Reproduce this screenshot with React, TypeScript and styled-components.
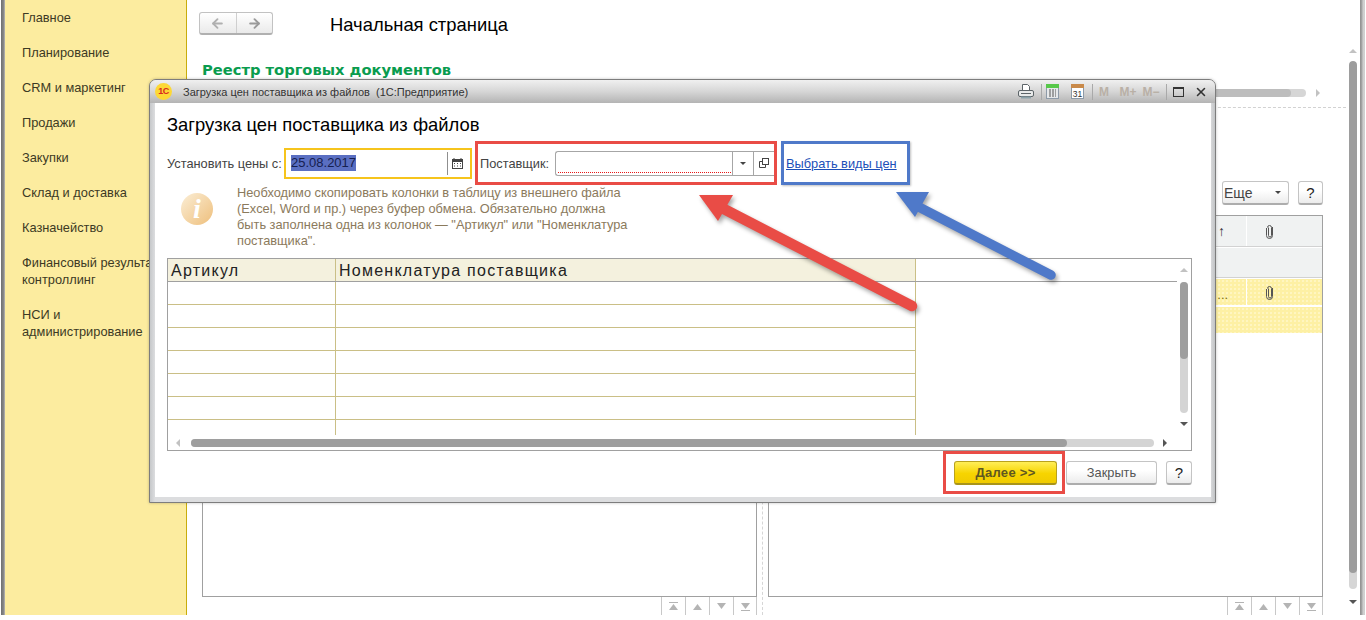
import React from 'react';
import styled, { createGlobalStyle } from 'styled-components';
import { ArrowLeft, ArrowRight, X } from 'lucide-react';

const GlobalStyle = createGlobalStyle`
  html, body {
    margin: 0;
    padding: 0;
    background: #fff;
  }
  body {
    font-family: "Liberation Sans", Arial, sans-serif;
    font-size: 12.8px;
    color: #333;
  }
`;

const Screen = styled.div`
  position: relative;
  width: 1366px;
  height: 620px;
  overflow: hidden;
`;

const Shell = styled.div`
  display: flex;
  height: 615px;
`;

const LeftEdge = styled.div`
  width: 5px;
  background: linear-gradient(90deg, #fff 0, #fff 1px, #6f6f6f 1px, #8d8d8d 4px, #c4c4c4 5px);
`;

const RightEdge = styled.div`
  width: 6px;
  margin-left: 3px;
  background: linear-gradient(90deg, #8f8f8f 0, #a8a8a8 2px, #cfcfcf 3px, #d0d0d0 5px, #fff 5px);
`;

const Sidebar = styled.nav`
  width: 181px;
  flex: none;
  box-sizing: content-box;
  background: #fcec9f;
  border-right: 1px solid #c8ad0c;
  overflow: hidden;
`;

const SidebarItem = styled.div`
  padding: 9px 0 9px 17px;
  line-height: 17px;
  white-space: pre;
  color: #3d3a24;
`;

const Main = styled.main`
  width: 1162px;
  flex: none;
  display: flex;
  flex-direction: column;
`;

const TopBar = styled.div`
  display: flex;
  align-items: flex-start;
  height: 35px;
  padding: 12px 0 0 12px;
`;

const NavGroup = styled.div`
  display: flex;
  width: 74px;
  height: 23px;
  box-sizing: border-box;
  border: 1px solid #c2c2c2;
  border-bottom: 2px solid #b0b0b0;
  border-radius: 3px;
  background: linear-gradient(#fff, #eaeaea);
`;

const NavCell = styled.div<{ $divider?: boolean; $tone: string }>`
  flex: 1;
  display: flex;
  align-items: center;
  justify-content: center;
  color: ${p => p.$tone};
  border-left: ${p => (p.$divider ? '1px solid #cfcfcf' : 'none')};
`;

const PageTitle = styled.h1`
  margin: 0 0 0 57px;
  font-size: 18.4px;
  font-weight: 400;
  line-height: 26px;
  color: #000;
`;

const FormHeading = styled.h2`
  margin: 12px 0 8px 15px;
  font-family: "DejaVu Sans", Verdana, sans-serif;
  font-size: 14.7px;
  font-weight: 700;
  line-height: 22px;
  color: #0a9c4f;
`;

const TopScrollRow = styled.div`
  display: flex;
  align-items: center;
  height: 8px;
  padding-left: 15px;
`;

const TopScrollTrack = styled.div`
  width: 1104px;
  height: 8px;
  border-radius: 4px;
  background: #d6d6d6;
`;

const TopScrollThumb = styled.div`
  width: 1089px;
  height: 8px;
  border-radius: 4px;
  background: #bdbdbd;
`;

const Triangle = styled.span<{ $dir: 'up' | 'down' | 'left' | 'right'; $size?: number; $tone?: string }>`
  display: block;
  flex: none;
  width: 0;
  height: 0;
  ${p => {
    const s = p.$size ?? 4;
    const c = p.$tone ?? '#c2c2c2';
    if (p.$dir === 'up') return `border-left:${s}px solid transparent;border-right:${s}px solid transparent;border-bottom:${s}px solid ${c};`;
    if (p.$dir === 'down') return `border-left:${s}px solid transparent;border-right:${s}px solid transparent;border-top:${s}px solid ${c};`;
    if (p.$dir === 'left') return `border-top:${s}px solid transparent;border-bottom:${s}px solid transparent;border-right:${s}px solid ${c};`;
    return `border-top:${s}px solid transparent;border-bottom:${s}px solid transparent;border-left:${s}px solid ${c};`;
  }}
`;

const TopScrollArrow = styled.div`
  margin-left: 10px;
`;

const DashedRule = styled.div`
  margin-top: 10px;
  margin-right: 3px;
  border-top: 1px dashed #d2d2d2;
`;

const ActionRow = styled.div`
  display: flex;
  justify-content: flex-end;
  gap: 9px;
  margin-top: 73px;
  padding-right: 26px;
`;

const Button = styled.button<{ $w: number; $primary?: boolean }>`
  width: ${p => p.$w}px;
  height: 24px;
  box-sizing: border-box;
  padding: 0;
  display: flex;
  align-items: center;
  justify-content: center;
  font-family: inherit;
  font-size: ${p => (p.$primary ? 13 : 12.8)}px;
  letter-spacing: ${p => (p.$primary ? 0.3 : 0)}px;
  font-weight: ${p => (p.$primary ? 700 : 400)};
  color: ${p => (p.$primary ? '#5f5720' : '#555')};
  border: 1px solid ${p => (p.$primary ? '#b9a21e' : '#c4c4c4')};
  border-bottom: 2px solid ${p => (p.$primary ? '#a8941a' : '#adadad')};
  border-radius: 3px;
  background: ${p => (p.$primary ? 'linear-gradient(#ffee58, #f7d400 55%, #f0cb00)' : 'linear-gradient(#fff 40%, #ececec)')};
`;

const HelpMark = styled.span`
  font-size: 15px;
  color: #222;
`;

const MoreButton = styled(Button)`
  justify-content: flex-start;
  padding-left: 1px;
  font-size: 14px;
  color: #444;
  gap: 22px;
`;

const Panels = styled.div`
  display: grid;
  grid-template-columns: 555px 555px;
  column-gap: 11px;
  margin: 10px 0 0 15px;
  position: relative;
`;

const PanelColumn = styled.div`
  display: flex;
  flex-direction: column;
`;

const ListBox = styled.div`
  height: 382px;
  box-sizing: border-box;
  border: 1px solid #a0a0a0;
  overflow: hidden;
`;

const PanelDivider = styled.div`
  position: absolute;
  top: 0;
  bottom: 0;
  left: 560px;
  border-left: 1px dashed #d6d6d6;
`;

const ListRow = styled.div<{ $h: number; $kind: 'head' | 'group' | 'mark' }>`
  display: flex;
  height: ${p => p.$h}px;
  margin-bottom: 2px;
  background-color: ${p => (p.$kind === 'mark' ? '#fdf0a4' : '#f0f2f2')};
  background-image: ${p =>
    p.$kind === 'mark' ? 'radial-gradient(#fff6c2 0.7px, transparent 0.8px)' : 'none'};
  background-size: 4px 4px;
  box-shadow: 0 1px 0 ${p => (p.$kind === 'mark' ? '#fff' : '#d2d2d2')};
`;

const ListCell = styled.div<{ $w?: number }>`
  display: flex;
  align-items: center;
  ${p => (p.$w ? 'justify-content:flex-end;padding-right:21px;' : 'justify-content:flex-start;padding-left:18px;')}
  ${p => (p.$w ? `width:${p.$w}px;flex:none;box-sizing:border-box;` : 'flex:1;')}
  border-right: ${p => (p.$w ? '1px solid #fff' : 'none')};
  color: #333;
  font-size: 14px;
`;

const TruncatedValue = styled.span`
  margin-right: -3px;
  padding-top: 4px;
  font-size: 12.8px;
  color: #7a6a10;
`;

const Pager = styled.div`
  display: flex;
  justify-content: flex-end;
  height: 18px;
`;

const PagerCell = styled.div`
  width: 23px;
  display: flex;
  align-items: center;
  justify-content: center;
  border-left: 1px solid #c8c8c8;
  &:last-child {
    border-right: 1px solid #c8c8c8;
    width: 22px;
  }
`;

const PageScroll = styled.div`
  width: 8px;
  flex: none;
  height: 615px;
  box-sizing: border-box;
  padding-top: 49px;
  display: flex;
  flex-direction: column;
  align-items: center;
`;

const PageScrollTrack = styled.div`
  width: 8px;
  height: 528px;
  margin-top: 8px;
  border-radius: 4px;
  background: #d6d6d6;
  overflow: hidden;
`;

const PageScrollThumb = styled.div`
  width: 8px;
  height: 512px;
  border-radius: 4px;
  background: #9d9d9d;
`;

const PageScrollEnd = styled.div`
  margin-top: 11px;
`;

/* modal window */

const Modal = styled.section`
  position: absolute;
  left: 149px;
  top: 79px;
  width: 1067px;
  height: 424px;
  box-sizing: border-box;
  border: 1px solid #7d7d7d;
  border-radius: 7px 7px 0 0;
  background: linear-gradient(90deg, #c6c8ca, #dcdddf 5px, #dcdddf calc(100% - 5px), #c2c4c6);
  box-shadow: 0 0 3px rgba(0, 0, 0, 0.25);
  display: flex;
  flex-direction: column;
`;

const TitleBar = styled.header`
  display: flex;
  align-items: center;
  height: 23px;
  flex: none;
  border-radius: 6px 6px 0 0;
  background: linear-gradient(#f0f0f0, #d6d6d6 50%, #b4b4b4);
`;

const LogoBadge = styled.span`
  width: 17px;
  height: 17px;
  margin-left: 5px;
  flex: none;
  border-radius: 50%;
  background: #fdd835;
  color: #d8281e;
  font-size: 9px;
  font-weight: 700;
  line-height: 17px;
  text-align: center;
  letter-spacing: -0.5px;
`;

const WindowTitle = styled.span`
  margin-left: 11px;
  font-size: 11px;
  color: #333;
  white-space: pre;
`;

const WindowTools = styled.div`
  display: flex;
  align-items: center;
  height: 100%;
  margin-left: auto;
  padding-right: 4px;
`;

const ToolSlot = styled.div<{ $w: number }>`
  width: ${p => p.$w}px;
  display: flex;
  align-items: center;
  justify-content: center;
  color: #333;
`;

const MemoryKey = styled(ToolSlot)`
  font-size: 12px;
  font-weight: 700;
  color: #b9b0a6;
`;

const ToolSeparator = styled.span<{ $left?: number }>`
  width: 1px;
  height: 16px;
  margin-left: ${p => p.$left ?? 0}px;
  background: #a9a9a9;
`;

const ModalBody = styled.div`
  flex: 1;
  margin: 0 4px 5px 5px;
  padding: 11px 19px 0 12px;
  background: #fff;
  min-height: 0;
`;

const ModalHeading = styled.h2`
  margin: 0 0 5px;
  font-size: 18.4px;
  font-weight: 400;
  line-height: 22px;
  color: #000;
`;

const FormRow = styled.div`
  display: flex;
  align-items: center;
  height: 44px;
`;

const FieldLabel = styled.label<{ $w: number; $pad?: number }>`
  width: ${p => p.$w}px;
  padding-left: ${p => p.$pad ?? 0}px;
  flex: none;
  box-sizing: border-box;
  color: #444;
  white-space: nowrap;
`;

const DateFrame = styled.div`
  width: 188px;
  height: 31px;
  box-sizing: border-box;
  border: 2px solid #f6c41c;
  display: flex;
  align-items: center;
`;

const DateValue = styled.div`
  flex: 1;
  padding-left: 5px;
`;

const Selected = styled.span`
  font-size: 13px;
  line-height: 16px;
  display: inline-block;
  background: #5a6fc2;
  color: #16204f;
`;

const FieldDivider = styled.span`
  width: 1px;
  height: 23px;
  background: #8f8f8f;
`;

const CalendarSlot = styled.div`
  width: 22px;
  box-sizing: border-box;
  padding-right: 4px;
  display: flex;
  justify-content: center;
  color: #444;
`;

const SupplierFrame = styled.div`
  width: 302px;
  height: 44px;
  margin-left: 3px;
  box-sizing: border-box;
  border: 3px solid #e94c46;
  display: flex;
  align-items: center;
`;

const SupplierInput = styled.div`
  flex: 1;
  height: 25px;
  box-sizing: border-box;
  border: 1px solid #a6a6a6;
  border-right: none;
  border-radius: 3px 0 0 3px;
  display: flex;
`;

// required-field marker: a red dotted line along the bottom of the input
const SupplierText = styled.div`
  flex: 1;
  margin: 0 1px 2px 2px;
  background: linear-gradient(90deg, #e81818 50%, transparent 50%) left bottom / 2px 1px repeat-x;
`;

const InputButton = styled.div`
  width: 20px;
  flex: none;
  display: flex;
  align-items: center;
  justify-content: center;
  border-left: 1px solid #a6a6a6;
  color: #444;
`;

const PriceFrame = styled.div`
  width: 129px;
  height: 44px;
  margin-left: 4px;
  box-sizing: border-box;
  border: 3px solid #4f79c9;
  padding-left: 2px;
  display: flex;
  align-items: center;
  box-shadow: 1px 1px 2px rgba(0, 0, 0, 0.25);
`;

const PriceLink = styled.a`
  color: #1b4fb8;
  text-decoration: underline;
  white-space: nowrap;
`;

const InfoRow = styled.div`
  display: flex;
  height: 73px;
`;

const InfoBadge = styled.div`
  width: 32px;
  height: 32px;
  margin: 8px 0 0 14px;
  flex: none;
  border-radius: 50%;
  background: linear-gradient(135deg, #fbeed6, #eebf7c);
  color: #fff;
  font-family: "Liberation Serif", serif;
  font-size: 28px;
  font-style: italic;
  font-weight: 700;
  line-height: 32px;
  text-align: center;
`;

const InfoText = styled.p`
  margin: 0 0 0 24px;
  line-height: 16px;
  color: #8b7a5c;
  white-space: pre;
`;

const SheetFrame = styled.div`
  height: 193px;
  box-sizing: border-box;
  border: 1px solid #a0a0a0;
  display: flex;
  flex-direction: column;
`;

const SheetTop = styled.div`
  display: flex;
  flex: 1;
  min-height: 0;
`;

const SheetGrid = styled.div`
  flex: 1;
  overflow: hidden;
`;

const SheetHeader = styled.div`
  display: flex;
  height: 23px;
  box-sizing: border-box;
  border-bottom: 1px solid #a0a0a0;
`;

const HeaderCell = styled.div<{ $w: number }>`
  width: ${p => p.$w}px;
  box-sizing: border-box;
  padding-left: 3px;
  background: #f4f1de;
  border-right: 1px solid #cabf86;
  font-size: 16px;
  letter-spacing: 1.25px;
  line-height: 23px;
  color: #222;
  white-space: nowrap;
`;

const SheetRow = styled.div`
  display: flex;
  height: 23px;
  box-sizing: border-box;
`;

const SheetCell = styled.div<{ $w: number }>`
  width: ${p => p.$w}px;
  box-sizing: border-box;
  border-right: 1px solid #cabf86;
  border-bottom: 1px solid #cabf86;
`;

const VerticalBar = styled.div`
  width: 14px;
  flex: none;
  display: flex;
  flex-direction: column;
  align-items: center;
  padding-top: 9px;
  box-sizing: border-box;
`;

const VerticalTrack = styled.div`
  width: 8px;
  height: 131px;
  margin-top: 10px;
  border-radius: 4px;
  background: #d4d4d4;
`;

const VerticalThumb = styled.div`
  width: 8px;
  height: 77px;
  border-radius: 4px;
  background: #9e9e9e;
`;

const BarArrow = styled.div<{ $top?: number }>`
  margin-top: ${p => p.$top ?? 0}px;
`;

const HorizontalBar = styled.div`
  height: 15px;
  flex: none;
  display: flex;
  align-items: center;
  padding-left: 8px;
`;

const HorizontalTrack = styled.div`
  width: 963px;
  height: 8px;
  margin-left: 11px;
  border-radius: 4px;
  background: #d4d4d4;
`;

const HorizontalThumb = styled.div`
  width: 876px;
  height: 8px;
  border-radius: 4px;
  background: #9e9e9e;
`;

const ArrowEnd = styled.div`
  margin-left: 9px;
`;

const ModalFooter = styled.div`
  display: flex;
  align-items: center;
  height: 43px;
  padding-left: 776px;
`;

const NextFrame = styled.div`
  width: 122px;
  height: 43px;
  box-sizing: border-box;
  border: 3px solid #e94c46;
  padding-left: 8px;
  display: flex;
  align-items: center;
`;

const CloseButton = styled(Button)`
  margin-left: 1px;
`;

const FooterHelp = styled(Button)`
  margin-left: 9px;
`;

const CalloutLayer = styled.svg`
  position: absolute;
  left: 0;
  top: 0;
  pointer-events: none;
  filter: drop-shadow(2px 3px 2px rgba(0, 0, 0, 0.35));
`;

const MENU = [
  'Главное',
  'Планирование',
  'CRM и маркетинг',
  'Продажи',
  'Закупки',
  'Склад и доставка',
  'Казначейство',
  'Финансовый результат и\nконтроллинг',
  'НСИ и\nадминистрирование',
];

const INFO_TEXT =
  'Необходимо скопировать колонки в таблицу из внешнего файла\n' +
  '(Excel, Word и пр.) через буфер обмена. Обязательно должна\n' +
  'быть заполнена одна из колонок — "Артикул" или "Номенклатура\n' +
  'поставщика".';

const ClipIcon = () => (
  <svg width="9" height="15" viewBox="0 0 9 15" fill="none" stroke="#555" strokeWidth="1">
    <path d="M3 3v8a1.5 1.5 0 0 0 3 0V3a2 2 0 0 0-4 0" transform="translate(0.5 0.5)" />
    <path d="M1.5 4v7.5a3 3 0 0 0 6 0V3" />
  </svg>
);

const CalendarIcon = () => (
  <svg width="11" height="11" viewBox="0 0 11 11">
    <rect x="0.5" y="1.5" width="10" height="9" fill="none" stroke="#444" />
    <rect x="0.5" y="1" width="10" height="3" fill="#444" />
    <path d="M2 0v2M9 0v2" stroke="#444" />
    <path d="M2 5.5h1M5 5.5h1M8 5.5h1M2 8h1M5 8h1M8 8h1" stroke="#444" />
  </svg>
);

const OpenIcon = () => (
  <svg width="10" height="10" viewBox="0 0 10 10" fill="none" stroke="#444">
    <rect x="3.5" y="0.5" width="6" height="6" />
    <path d="M3 3.5H0.5v6h6V7" />
  </svg>
);

const PrintIcon = () => (
  <svg width="16" height="15" viewBox="0 0 16 15" fill="none" stroke="#5c6468">
    <path d="M4.5 6.5v-6h5l2 2v4" fill="#fff" />
    <rect x="0.5" y="6.5" width="15" height="6" rx="1.5" fill="#e8eaea" />
    <path d="M3 9.5h10" />
    <path d="M3 13.5h10" stroke="#8aa0a8" strokeWidth="2" />
  </svg>
);

const CalcIcon = () => (
  <svg width="13" height="15" viewBox="0 0 13 15">
    <rect x="0.5" y="0.5" width="12" height="14" fill="#e6e8ea" stroke="#8d9aa8" />
    <rect x="0" y="0" width="13" height="4" fill="#57c84a" />
    <path d="M3 6h2M6 6h2M9 6h1M3 8h2M6 8h2M9 8h1M3 10h2M6 10h2M9 10h1M3 12h2M6 12h2M9 12h1" stroke="#555" />
  </svg>
);

const CalendarDayIcon = () => (
  <svg width="13" height="15" viewBox="0 0 13 15">
    <rect x="0.5" y="0.5" width="12" height="14" fill="#fff" stroke="#8d9aa8" />
    <rect x="0" y="0" width="13" height="4" fill="#c98a4a" />
    <text x="6.5" y="12.5" fontSize="8.5" textAnchor="middle" fontFamily="Liberation Sans" fill="#333">31</text>
  </svg>
);

const MaximizeIcon = () => (
  <svg width="11" height="10" viewBox="0 0 11 10" fill="none">
    <rect x="0.5" y="1" width="10" height="8.5" stroke="#333" />
    <path d="M0 1h11" stroke="#333" strokeWidth="2" />
  </svg>
);

const PagerMark = ({ dir, bar }: { dir: 'up' | 'down'; bar?: boolean }) => (
  <svg width="11" height="9" viewBox="0 0 11 9" fill="#b4b4b4">
    {dir === 'up' ? <path d="M5.5 2 10 8H1z" /> : <path d="M5.5 7 10 1H1z" />}
    {bar && (dir === 'up' ? <rect x="1" y="0" width="9" height="1" /> : <rect x="1" y="8" width="9" height="1" />)}
  </svg>
);

const PanelPager = () => (
  <Pager>
    <PagerCell><PagerMark dir="up" bar /></PagerCell>
    <PagerCell><PagerMark dir="up" /></PagerCell>
    <PagerCell><PagerMark dir="down" /></PagerCell>
    <PagerCell><PagerMark dir="down" bar /></PagerCell>
  </Pager>
);

export default function App() {
  return (
    <Screen>
      <GlobalStyle />
      <Shell>
        <LeftEdge />
        <Sidebar>
          {MENU.map(item => (
            <SidebarItem key={item}>{item}</SidebarItem>
          ))}
        </Sidebar>
        <Main>
          <TopBar>
            <NavGroup>
              <NavCell $tone="#b0b0b0"><ArrowLeft size={15} strokeWidth={3} /></NavCell>
              <NavCell $divider $tone="#9a9a9a"><ArrowRight size={15} strokeWidth={3} /></NavCell>
            </NavGroup>
            <PageTitle>Начальная страница</PageTitle>
          </TopBar>
          <FormHeading>Реестр торговых документов</FormHeading>
          <TopScrollRow>
            <TopScrollTrack><TopScrollThumb /></TopScrollTrack>
            <TopScrollArrow><Triangle $dir="right" /></TopScrollArrow>
          </TopScrollRow>
          <DashedRule />
          <ActionRow>
            <MoreButton $w={67}>
              <span>Еще</span>
              <Triangle $dir="down" $size={3} $tone="#444" />
            </MoreButton>
            <Button $w={25}><HelpMark>?</HelpMark></Button>
          </ActionRow>
          <Panels>
            <PanelColumn>
              <ListBox />
              <PanelPager />
            </PanelColumn>
            <PanelDivider />
            <PanelColumn>
              <ListBox>
                <ListRow $h={30} $kind="head">
                  <ListCell $w={478}>↑</ListCell>
                  <ListCell><ClipIcon /></ListCell>
                </ListRow>
                <ListRow $h={29} $kind="group" />
                <ListRow $h={26} $kind="mark">
                  <ListCell $w={478}><TruncatedValue>...</TruncatedValue></ListCell>
                  <ListCell><ClipIcon /></ListCell>
                </ListRow>
                <ListRow $h={26} $kind="mark" />
              </ListBox>
              <PanelPager />
            </PanelColumn>
          </Panels>
        </Main>
        <PageScroll>
          <Triangle $dir="up" />
          <PageScrollTrack><PageScrollThumb /></PageScrollTrack>
          <PageScrollEnd><Triangle $dir="down" $tone="#555" /></PageScrollEnd>
        </PageScroll>
        <RightEdge />
      </Shell>

      <Modal>
        <TitleBar>
          <LogoBadge>1С</LogoBadge>
          <WindowTitle>Загрузка цен поставщика из файлов  (1С:Предприятие)</WindowTitle>
          <WindowTools>
            <ToolSlot $w={24}><PrintIcon /></ToolSlot>
            <ToolSeparator $left={3} />
            <ToolSlot $w={20}><CalcIcon /></ToolSlot>
            <ToolSlot $w={30}><CalendarDayIcon /></ToolSlot>
            <ToolSeparator />
            <MemoryKey $w={22}>M</MemoryKey>
            <MemoryKey $w={26}>M+</MemoryKey>
            <MemoryKey $w={20}>M−</MemoryKey>
            <ToolSeparator $left={5} />
            <ToolSlot $w={23}><MaximizeIcon /></ToolSlot>
            <ToolSlot $w={21}><X size={14} strokeWidth={2.6} /></ToolSlot>
          </WindowTools>
        </TitleBar>
        <ModalBody>
          <ModalHeading>Загрузка цен поставщика из файлов</ModalHeading>
          <FormRow>
            <FieldLabel $w={117}>Установить цены с:</FieldLabel>
            <DateFrame>
              <DateValue><Selected>25.08.2017</Selected></DateValue>
              <FieldDivider />
              <CalendarSlot><CalendarIcon /></CalendarSlot>
            </DateFrame>
            <SupplierFrame>
              <FieldLabel $w={77} $pad={2}>Поставщик:</FieldLabel>
              <SupplierInput>
                <SupplierText />
                <InputButton><Triangle $dir="down" $size={3} $tone="#444" /></InputButton>
                <InputButton><OpenIcon /></InputButton>
              </SupplierInput>
            </SupplierFrame>
            <PriceFrame>
              <PriceLink>Выбрать виды цен</PriceLink>
            </PriceFrame>
          </FormRow>
          <InfoRow>
            <InfoBadge>i</InfoBadge>
            <InfoText>{INFO_TEXT}</InfoText>
          </InfoRow>
          <SheetFrame>
            <SheetTop>
              <SheetGrid>
                <SheetHeader>
                  <HeaderCell $w={168}>Артикул</HeaderCell>
                  <HeaderCell $w={580}>Номенклатура поставщика</HeaderCell>
                </SheetHeader>
                {Array.from({ length: 7 }, (_, i) => (
                  <SheetRow key={i}>
                    <SheetCell $w={168} />
                    <SheetCell $w={580} />
                  </SheetRow>
                ))}
              </SheetGrid>
              <VerticalBar>
                <BarArrow><Triangle $dir="up" /></BarArrow>
                <VerticalTrack><VerticalThumb /></VerticalTrack>
                <BarArrow $top={9}><Triangle $dir="down" $tone="#555" /></BarArrow>
              </VerticalBar>
            </SheetTop>
            <HorizontalBar>
              <Triangle $dir="left" />
              <HorizontalTrack><HorizontalThumb /></HorizontalTrack>
              <ArrowEnd><Triangle $dir="right" $tone="#555" /></ArrowEnd>
            </HorizontalBar>
          </SheetFrame>
          <ModalFooter>
            <NextFrame>
              <Button $w={103} $primary>Далее &gt;&gt;</Button>
            </NextFrame>
            <CloseButton $w={91}>Закрыть</CloseButton>
            <FooterHelp $w={26}><HelpMark>?</HelpMark></FooterHelp>
          </ModalFooter>
        </ModalBody>
      </Modal>

      <CalloutLayer width="1366" height="620" viewBox="0 0 1366 620">
        <path d="M912 306 722 208" stroke="#e94c46" strokeWidth="10.5" strokeLinecap="round" />
        <path d="M699 195h34l-15 26z" fill="#e94c46" />
        <path d="M1051 275 915 205" stroke="#4f79c9" strokeWidth="9.5" strokeLinecap="round" />
        <path d="M896 192h33l-14 25z" fill="#4f79c9" />
      </CalloutLayer>
    </Screen>
  );
}
